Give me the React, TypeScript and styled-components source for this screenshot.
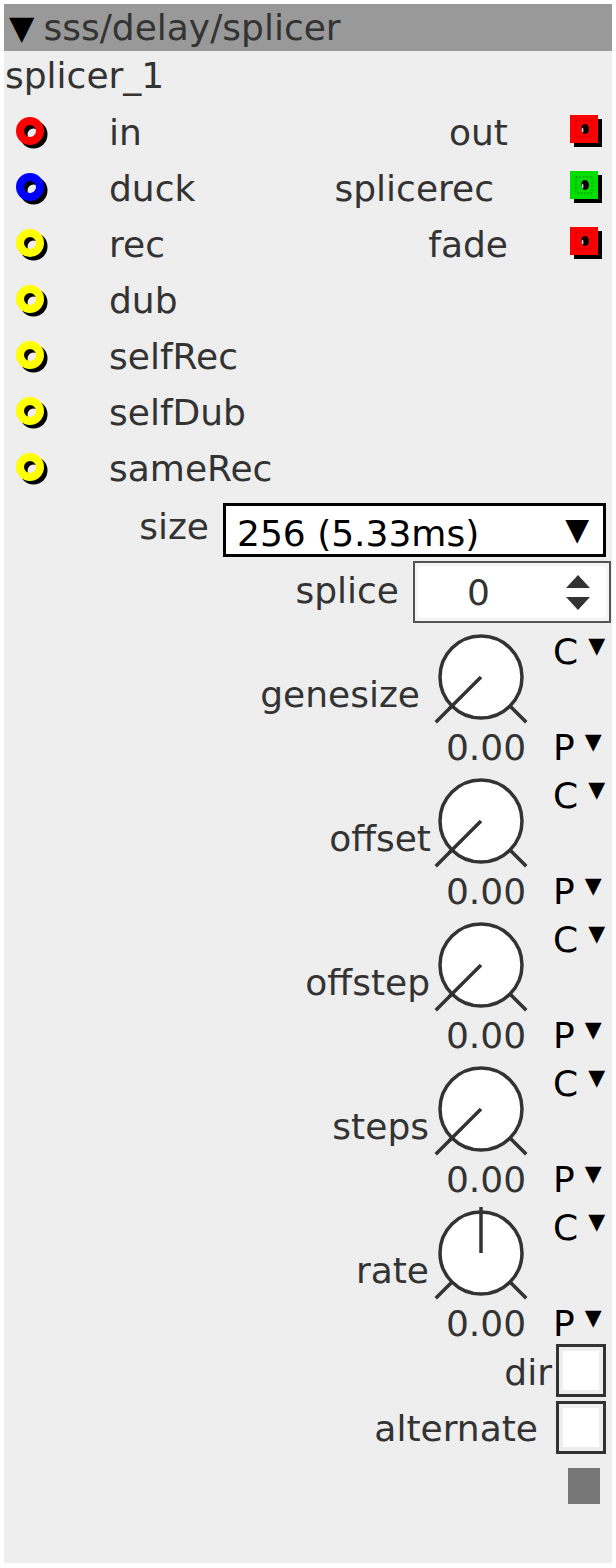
import React from "react";
import styled, { createGlobalStyle } from "styled-components";

const GlobalStyle = createGlobalStyle`
  html, body { margin: 0; padding: 0; background: #ffffff; }
  body { font-family: "DejaVu Sans", "Noto Sans", sans-serif; }
`;

const Panel = styled.div`
  margin: 4px;
  width: 608px;
  height: 1559px;
  background: #eeeeee;
  display: flex;
  flex-direction: column;
  font-family: "DejaVu Sans", "Noto Sans", sans-serif;
  font-size: 36px;
  color: #333333;
  overflow: hidden;
`;

const Header = styled.div`
  height: 47px;
  background: #999999;
  display: flex;
  align-items: center;
  padding-left: 4px;
  white-space: nowrap;
`;

const HeaderArrow = styled.span`
  color: #000;
  font-size: 33px;
  margin-right: 9px;
  margin-left: 1px;
`;

const InstanceName = styled.div`
  height: 53px;
  line-height: 50px;
  padding-left: 1px;
`;

const IOSection = styled.div`
  display: flex;
`;

const Column = styled.div<{ $right?: boolean }>`
  display: flex;
  flex-direction: column;
  flex: 1;
  align-items: ${(p) => (p.$right ? "flex-end" : "stretch")};
`;

const IORow = styled.div<{ $right?: boolean }>`
  height: 56px;
  display: flex;
  align-items: center;
  justify-content: ${(p) => (p.$right ? "flex-end" : "flex-start")};
`;

const InletIcon = styled.svg`
  width: 36px;
  height: 36px;
  margin-left: 11px;
  margin-right: 58px;
  margin-top: 4px;
`;

const OutletIcon = styled.svg`
  width: 34px;
  height: 34px;
  margin-right: 8px;
`;

const OutletLabel = styled.span<{ $extra: number }>`
  white-space: nowrap;
  margin-right: ${(p) => 62 + p.$extra}px;
`;

const Label = styled.span`
  white-space: nowrap;
`;

const ParamRow = styled.div<{ $top: number; $height: number; $right: number }>`
  display: flex;
  justify-content: flex-end;
  align-items: center;
  margin-top: ${(p) => p.$top}px;
  height: ${(p) => p.$height}px;
  padding-right: ${(p) => p.$right}px;
`;

const RowLabel = styled.span<{ $gap: number; $shift?: number }>`
  margin-right: ${(p) => p.$gap}px;
  white-space: nowrap;
  position: relative;
  top: ${(p) => p.$shift ?? 0}px;
`;

const Dropdown = styled.div`
  box-sizing: border-box;
  width: 383px;
  height: 54px;
  border: 3px solid #000;
  background: #fff;
  color: #000;
  display: flex;
  align-items: center;
  justify-content: space-between;
  padding: 6px 14px 0 11px;
`;

const DropArrow = styled.span`
  font-size: 31px;
  margin-top: -8px;
`;

const Spinner = styled.div`
  box-sizing: border-box;
  width: 198px;
  height: 62px;
  border: 2px solid #555;
  box-shadow: inset 0 0 0 3px #f4f4f4;
  background: #fff;
  display: flex;
  align-items: center;
  padding-left: 52px;
  padding-right: 18px;
  justify-content: space-between;
`;

const SpinArrows = styled.svg`
  width: 26px;
  height: 38px;
`;

const KnobBlock = styled.div<{ $top: number }>`
  display: flex;
  justify-content: flex-end;
  height: 144px;
  margin-top: ${(p) => p.$top}px;
`;

const KnobLabel = styled.span<{ $extra: number }>`
  margin-top: 49px;
  line-height: 40px;
  height: 40px;
  margin-right: ${(p) => 2 + p.$extra}px;
  white-space: nowrap;
`;

const KnobColumn = styled.div`
  width: 96px;
  display: flex;
  flex-direction: column;
`;

const KnobSvg = styled.svg`
  width: 96px;
  height: 102px;
  display: block;
`;

const KnobValue = styled.div`
  line-height: 40px;
  height: 40px;
  text-align: center;
  padding-left: 10px;
  white-space: nowrap;
`;

const ModColumn = styled.div`
  width: 59px;
  margin-left: 24px;
  display: flex;
  flex-direction: column;
  justify-content: space-between;
  padding-top: 6px;
  padding-bottom: 2px;
  color: #000;
`;

const ModItem = styled.div`
  line-height: 40px;
  height: 40px;
  display: flex;
  align-items: center;
  white-space: nowrap;
`;

const ModArrow = styled.span`
  font-size: 22px;
  margin-left: 10px;
  margin-top: -12px;
`;

const Checkbox = styled.div`
  box-sizing: border-box;
  width: 50px;
  height: 53px;
  border: 3px solid #333;
  background: #fff;
  box-shadow: inset 0 0 0 4px #eeeeee;
`;

const Indicator = styled.div`
  width: 32px;
  height: 36px;
  background: #777777;
  margin-top: 14px;
  margin-left: auto;
  margin-right: 12px;
`;

const Inlet = ({ color }: { color: string }) => (
  <InletIcon viewBox="0 0 36 36">
    <circle cx="18.5" cy="18.5" r="10" fill="none" stroke="#000" strokeWidth="8" />
    <circle cx="15" cy="15" r="10" fill="none" stroke={color} strokeWidth="8" />
  </InletIcon>
);

const Outlet = ({ color }: { color: string }) => (
  <OutletIcon viewBox="0 0 34 34">
    <rect x="4" y="4" width="28" height="28" fill="#000" />
    <rect x="0" y="0" width="28" height="28" fill={color} />
    <rect
      x="6"
      y="6"
      width="16"
      height="16"
      fill="none"
      stroke="#300"
      strokeWidth="0.8"
      strokeDasharray="1.5 2"
      opacity="0.6"
    />
    <ellipse cx="15" cy="14" rx="4" ry="5" fill="#000" />
    <ellipse cx="12.5" cy="15" rx="1" ry="2.5" fill="#fff" opacity="0.8" />
  </OutletIcon>
);

const Knob = ({ bipolar }: { bipolar?: boolean }) => {
  const cx = 48;
  const cy = 51;
  const r = 41;
  const d = 0.7071;
  const ind = bipolar
    ? { x2: cx, y2: cy - 46 }
    : { x2: cx - 45 * d, y2: cy + 45 * d };
  return (
    <KnobSvg viewBox="0 0 96 102">
      <circle cx={cx} cy={cy} r={r} fill="#fff" stroke="#333" strokeWidth="3.5" />
      <line x1={cx - r * d} y1={cy + r * d} x2={cx - 64 * d} y2={cy + 64 * d} stroke="#333" strokeWidth="3.5" />
      <line x1={cx + r * d} y1={cy + r * d} x2={cx + 64 * d} y2={cy + 64 * d} stroke="#333" strokeWidth="3.5" />
      <line x1={cx} y1={cy} x2={ind.x2} y2={ind.y2} stroke="#333" strokeWidth="3.5" />
    </KnobSvg>
  );
};

const inlets: { name: string; color: string }[] = [
  { name: "in", color: "#ff0000" },
  { name: "duck", color: "#0000ff" },
  { name: "rec", color: "#ffff00" },
  { name: "dub", color: "#ffff00" },
  { name: "selfRec", color: "#ffff00" },
  { name: "selfDub", color: "#ffff00" },
  { name: "sameRec", color: "#ffff00" },
];

const outlets: { name: string; color: string; extra: number }[] = [
  { name: "out", color: "#ff0000", extra: 0 },
  { name: "splicerec", color: "#00dd00", extra: 14 },
  { name: "fade", color: "#ff0000", extra: 0 },
];

const knobs: { name: string; bipolar?: boolean; extra: number }[] = [
  { name: "genesize", extra: 11 },
  { name: "offset", extra: 0 },
  { name: "offstep", extra: 1 },
  { name: "steps", extra: 2 },
  { name: "rate", bipolar: true, extra: 2 },
];

export default function App() {
  return (
    <>
      <GlobalStyle />
      <Panel>
        <Header>
          <HeaderArrow>▼</HeaderArrow>
          <span>sss/delay/splicer</span>
        </Header>
        <InstanceName>splicer_1</InstanceName>
        <IOSection>
          <Column>
            {inlets.map((i) => (
              <IORow key={i.name}>
                <Inlet color={i.color} />
                <Label>{i.name}</Label>
              </IORow>
            ))}
          </Column>
          <Column $right>
            {outlets.map((o) => (
              <IORow key={o.name} $right>
                <OutletLabel $extra={o.extra}>{o.name}</OutletLabel>
                <Outlet color={o.color} />
              </IORow>
            ))}
          </Column>
        </IOSection>
        <ParamRow $top={7} $height={54} $right={6}>
          <RowLabel $gap={14} $shift={-4}>size</RowLabel>
          <Dropdown>
            <span>256 (5.33ms)</span>
            <DropArrow>▼</DropArrow>
          </Dropdown>
        </ParamRow>
        <ParamRow $top={4} $height={62} $right={1}>
          <RowLabel $gap={14} $shift={-2}>splice</RowLabel>
          <Spinner>
            <span>0</span>
            <SpinArrows viewBox="0 0 26 38">
              <polygon points="13,2 25,15 1,15" fill="#333" />
              <polygon points="1,24 25,24 13,37" fill="#333" />
            </SpinArrows>
          </Spinner>
        </ParamRow>
        {knobs.map((k, idx) => (
          <KnobBlock key={k.name} $top={idx === 0 ? 3 : 0}>
            <KnobLabel $extra={k.extra}>{k.name}</KnobLabel>
            <KnobColumn>
              <Knob bipolar={k.bipolar} />
              <KnobValue>0.00</KnobValue>
            </KnobColumn>
            <ModColumn>
              <ModItem>
                C<ModArrow>▼</ModArrow>
              </ModItem>
              <ModItem>
                P<ModArrow>▼</ModArrow>
              </ModItem>
            </ModColumn>
          </KnobBlock>
        ))}
        <ParamRow $top={-2} $height={53} $right={6}>
          <RowLabel $gap={4} $shift={2}>dir</RowLabel>
          <Checkbox />
        </ParamRow>
        <ParamRow $top={3} $height={54} $right={6}>
          <RowLabel $gap={18} $shift={1}>alternate</RowLabel>
          <Checkbox />
        </ParamRow>
        <Indicator />
      </Panel>
    </>
  );
}
